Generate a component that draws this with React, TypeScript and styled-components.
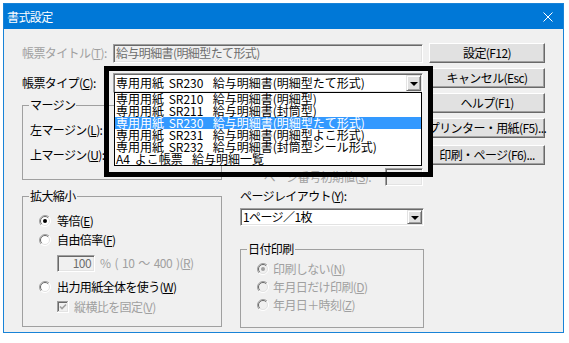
import React from "react";
import styled, { createGlobalStyle } from "styled-components";

const FONT = `"Noto Sans CJK JP", "Noto Sans", sans-serif`;

const Global = createGlobalStyle`
  html, body { margin: 0; padding: 0; background: #ffffff; }
  body { font-family: ${FONT}; font-size: 12px; }
  * { box-sizing: border-box; }
`;

const Window = styled.div`
  margin: 3px 0 0 3px;
  width: 561px;
  height: 330px;
  border: 1px solid #1883d7;
  background: #f0f0f0;
  display: flex;
  flex-direction: column;
  font-family: ${FONT};
  font-size: 12px;
  letter-spacing: -0.6px;
  color: #000;
`;

const TitleBar = styled.div`
  height: 25px;
  flex: none;
  background: #0078d7;
  color: #fff;
  display: flex;
  align-items: center;
  justify-content: space-between;
  padding: 0 10px 0 3px;
`;

const TitleText = styled.span`
  font-size: 12px;
  line-height: 25px;
`;

const CloseIcon = () => (
  <svg width="10" height="10" viewBox="0 0 10 10">
    <path d="M0.5 0.5 L9.5 9.5 M9.5 0.5 L0.5 9.5" stroke="#fff" strokeWidth="1" />
  </svg>
);

const Body = styled.div`
  position: relative;
  flex: 1;
  display: flex;
  gap: 5px;
  padding: 14px 0 0 18px;
`;

const MainColumn = styled.div`
  width: 402px;
  display: flex;
  flex-direction: column;
`;

const ButtonColumn = styled.div`
  width: 116px;
  display: flex;
  flex-direction: column;
  gap: 5px;
`;

const Button = styled.div<{ $extra?: number }>`
  height: 20px;
  margin-top: ${(p) => p.$extra ?? 0}px;
  background: #e1e1e1;
  border: 1px solid;
  border-color: #ffffff #696969 #696969 #ffffff;
  box-shadow: inset -1px -1px #a0a0a0;
  display: flex;
  align-items: center;
  justify-content: center;
  line-height: 14px;
  white-space: nowrap;
`;

const FieldRow = styled.div<{ $top?: number }>`
  display: flex;
  align-items: center;
  height: 20px;
  margin-top: ${(p) => p.$top ?? 0}px;
`;

const GroupRow = styled.div<{ $top?: number }>`
  display: flex;
  margin-top: ${(p) => p.$top ?? 0}px;
`;

const Label = styled.span<{ $disabled?: boolean; $width?: number; $indent?: number; $spaced?: boolean }>`
  flex: none;
  width: ${(p) => (p.$width ? `${p.$width}px` : "auto")};
  margin-left: ${(p) => p.$indent ?? 0}px;
  color: ${(p) => (p.$disabled ? "#a0a0a0" : "#000")};
  line-height: 14px;
  white-space: pre;
  word-spacing: ${(p) => (p.$spaced ? "2px" : "0")};
`;

const TextField = styled.div<{ $disabled?: boolean; $width: number; $height: number; $right?: boolean }>`
  flex: none;
  width: ${(p) => p.$width}px;
  height: ${(p) => p.$height}px;
  background: ${(p) => (p.$disabled ? "#f0f0f0" : "#fff")};
  color: ${(p) => (p.$disabled ? "#6d6d6d" : "#000")};
  border: 1px solid;
  border-color: #a0a0a0 #ffffff #ffffff #a0a0a0;
  box-shadow: inset 1px 1px #696969, inset -1px -1px #e3e3e3;
  display: flex;
  align-items: center;
  justify-content: ${(p) => (p.$right ? "flex-end" : "flex-start")};
  padding: 0 3px 0 2px;
  line-height: 14px;
  white-space: nowrap;
  overflow: hidden;
`;

const ComboBox = styled.div<{ $width: number; $height: number }>`
  position: relative;
  flex: none;
  width: ${(p) => p.$width}px;
  height: ${(p) => p.$height}px;
  background: #fff;
  border: 1px solid;
  border-color: #a0a0a0 #ffffff #ffffff #a0a0a0;
  box-shadow: inset 1px 1px #696969, inset -1px -1px #e3e3e3;
  padding: 1px;
  display: flex;
  align-items: stretch;
`;

const ComboText = styled.span<{ $mono?: boolean }>`
  flex: 1;
  padding-left: 1px;
  display: flex;
  align-items: center;
  white-space: pre;
  line-height: 14px;
  letter-spacing: ${(p) => (p.$mono ? "0" : "inherit")};
  word-spacing: ${(p) => (p.$mono ? "2px" : "0")};
`;

const DropButton = styled.span`
  flex: none;
  width: 15px;
  background: #e1e1e1;
  border: 1px solid;
  border-color: #e3e3e3 #696969 #696969 #e3e3e3;
  box-shadow: inset 1px 1px #ffffff, inset -1px -1px #a0a0a0;
  display: flex;
  align-items: center;
  justify-content: center;
`;

const DropArrow = styled.span`
  width: 0;
  height: 0;
  border-left: 4px solid transparent;
  border-right: 4px solid transparent;
  border-top: 4px solid #000;
  margin-top: 1px;
`;

const DropList = styled.div`
  position: absolute;
  top: 100%;
  left: 0;
  right: 0;
  background: #fff;
  border: 1px solid #000;
  padding: 0;
  z-index: 2;
`;

const DropItem = styled.div<{ $selected?: boolean }>`
  height: 12px;
  line-height: 12px;
  padding-left: 1px;
  white-space: pre;
  letter-spacing: 0;
  word-spacing: 2px;
  background: ${(p) => (p.$selected ? "#3399ff" : "transparent")};
  color: ${(p) => (p.$selected ? "#fff" : "#000")};
`;

const SectionGrid = styled.div`
  margin-top: 5px;
  display: grid;
  grid-template-columns: 200px 184px;
  grid-template-rows: 88px auto;
  column-gap: 18px;
  row-gap: 3px;
`;

const GroupBox = styled.fieldset<{ $height: number; $width?: number }>`
  margin: 0;
  padding: 0 0 0 6px;
  min-width: 0;
  width: ${(p) => (p.$width ? `${p.$width}px` : "auto")};
  height: ${(p) => p.$height}px;
  border: 1px solid #a0a0a0;
  align-self: start;
  display: flex;
  flex-direction: column;
`;

const Legend = styled.legend`
  padding: 0 1px;
  line-height: 14px;
  font-size: 12px;
`;

const PageNumberRow = styled.div`
  align-self: end;
  display: flex;
  align-items: center;
  justify-content: flex-end;
  gap: 14px;
  padding-right: 1px;
`;

const RightColumn = styled.div`
  display: flex;
  flex-direction: column;
`;

const OptionRow = styled.div<{ $top?: number; $indent?: number; $gap?: number }>`
  display: flex;
  align-items: center;
  height: 16px;
  margin-top: ${(p) => p.$top ?? 0}px;
  margin-left: ${(p) => p.$indent ?? 0}px;
  gap: ${(p) => p.$gap ?? 6}px;
`;

const Annotation = styled.div`
  position: absolute;
  left: 100px;
  top: 37px;
  width: 329px;
  height: 111px;
  border: 5px solid #000;
  pointer-events: none;
  z-index: 3;
`;

const Radio = ({ checked, disabled }: { checked?: boolean; disabled?: boolean }) => (
  <svg width="12" height="12" viewBox="0 0 12 12" style={{ flex: "none" }}>
    <circle cx="6" cy="6" r="5.5" fill={disabled ? "#f0f0f0" : "#ffffff"} />
    <path d="M10 2 A5.66 5.66 0 0 0 2 10" stroke="#a0a0a0" fill="none" />
    <path d="M9.2 2.8 A4.5 4.5 0 0 0 2.8 9.2" stroke="#696969" fill="none" />
    <path d="M2 10 A5.66 5.66 0 0 0 10 2" stroke="#ffffff" fill="none" />
    <path d="M2.8 9.2 A4.5 4.5 0 0 0 9.2 2.8" stroke="#e3e3e3" fill="none" />
    {checked && <circle cx="6" cy="6" r="2" fill={disabled ? "#a0a0a0" : "#000"} />}
  </svg>
);

const Check = () => (
  <svg width="12" height="12" viewBox="0 0 12 12" style={{ flex: "none" }}>
    <rect x="0" y="0" width="12" height="12" fill="#ffffff" />
    <rect x="0" y="0" width="11" height="11" fill="#a0a0a0" />
    <rect x="1" y="1" width="10" height="10" fill="#e3e3e3" />
    <rect x="1" y="1" width="9" height="9" fill="#696969" />
    <rect x="2" y="2" width="8" height="8" fill="#f0f0f0" />
    <path d="M3 5.5 L5 7.5 L9 3.5" stroke="#a0a0a0" strokeWidth="1.6" fill="none" />
  </svg>
);

const items = [
  "専用用紙 SR210  給与明細書(明細型)",
  "専用用紙 SR211  給与明細書(封筒型)",
  "専用用紙 SR230  給与明細書(明細型たて形式)",
  "専用用紙 SR231  給与明細書(明細型よこ形式)",
  "専用用紙 SR232  給与明細書(封筒型シール形式)",
  "A4 よこ帳票  給与明細一覧",
];

export default function App() {
  return (
    <>
      <Global />
      <Window>
        <TitleBar>
          <TitleText>書式設定</TitleText>
          <CloseIcon />
        </TitleBar>
        <Body>
          <MainColumn>
            <FieldRow>
              <Label $disabled $width={91}>
                帳票タイトル(<u>T</u>):
              </Label>
              <TextField $disabled $width={310} $height={19}>
                給与明細書(明細型たて形式)
              </TextField>
            </FieldRow>
            <FieldRow $top={10}>
              <Label $width={91}>
                帳票タイプ(<u>C</u>):
              </Label>
              <ComboBox $width={310} $height={20}>
                <ComboText $mono>{items[2]}</ComboText>
                <DropButton>
                  <DropArrow />
                </DropButton>
                <DropList>
                  {items.map((t, i) => (
                    <DropItem key={t} $selected={i === 2}>
                      {t}
                    </DropItem>
                  ))}
                </DropList>
              </ComboBox>
            </FieldRow>
            <SectionGrid>
              <GroupBox $height={82}>
                <Legend>マージン</Legend>
                <FieldRow $top={8}>
                  <Label $indent={1}>
                    左マージン(<u>L</u>):
                  </Label>
                </FieldRow>
                <FieldRow $top={5}>
                  <Label $indent={1}>
                    上マージン(<u>U</u>):
                  </Label>
                </FieldRow>
              </GroupBox>
              <PageNumberRow>
                <Label $disabled>
                  ページ番号初期値(<u>S</u>):
                </Label>
                <TextField $disabled $width={38} $height={18} />
              </PageNumberRow>
              <GroupBox $height={138}>
                <Legend>拡大縮小</Legend>
                <OptionRow $top={10} $indent={10}>
                  <Radio checked />
                  <Label>
                    等倍(<u>E</u>)
                  </Label>
                </OptionRow>
                <OptionRow $top={3} $indent={10}>
                  <Radio />
                  <Label>
                    自由倍率(<u>F</u>)
                  </Label>
                </OptionRow>
                <OptionRow $top={7} $indent={28} $gap={5}>
                  <TextField $disabled $width={38} $height={17} $right>
                    100
                  </TextField>
                  <Label $disabled $spaced>
                    % ( 10 〜 400 )(<u>R</u>)
                  </Label>
                </OptionRow>
                <OptionRow $top={8} $indent={10}>
                  <Radio />
                  <Label>
                    出力用紙全体を使う(<u>W</u>)
                  </Label>
                </OptionRow>
                <OptionRow $top={4} $indent={28} $gap={5}>
                  <Check />
                  <Label $disabled>
                    縦横比を固定(<u>V</u>)
                  </Label>
                </OptionRow>
              </GroupBox>
              <RightColumn>
                <Label>
                  ページレイアウト(<u>Y</u>):
                </Label>
                <FieldRow $top={4}>
                  <ComboBox $width={184} $height={18}>
                    <ComboText>1ページ／1枚</ComboText>
                    <DropButton>
                      <DropArrow />
                    </DropButton>
                  </ComboBox>
                </FieldRow>
                <GroupRow $top={15}>
                  <GroupBox $height={86} $width={184}>
                    <Legend>日付印刷</Legend>
                    <OptionRow $top={5} $indent={10} $gap={4}>
                      <Radio checked disabled />
                      <Label $disabled>
                        印刷しない(<u>N</u>)
                      </Label>
                    </OptionRow>
                    <OptionRow $top={2} $indent={10} $gap={4}>
                      <Radio disabled />
                      <Label $disabled>
                        年月日だけ印刷(<u>D</u>)
                      </Label>
                    </OptionRow>
                    <OptionRow $top={2} $indent={10} $gap={4}>
                      <Radio disabled />
                      <Label $disabled>
                        年月日＋時刻(<u>Z</u>)
                      </Label>
                    </OptionRow>
                  </GroupBox>
                </GroupRow>
              </RightColumn>
            </SectionGrid>
          </MainColumn>
          <ButtonColumn>
            <Button>設定(F12)</Button>
            <Button>キャンセル(Esc)</Button>
            <Button>ヘルプ(F1)</Button>
            <Button>プリンター・用紙(F5)...</Button>
            <Button $extra={2}>印刷・ページ(F6)...</Button>
          </ButtonColumn>
          <Annotation />
        </Body>
      </Window>
    </>
  );
}
